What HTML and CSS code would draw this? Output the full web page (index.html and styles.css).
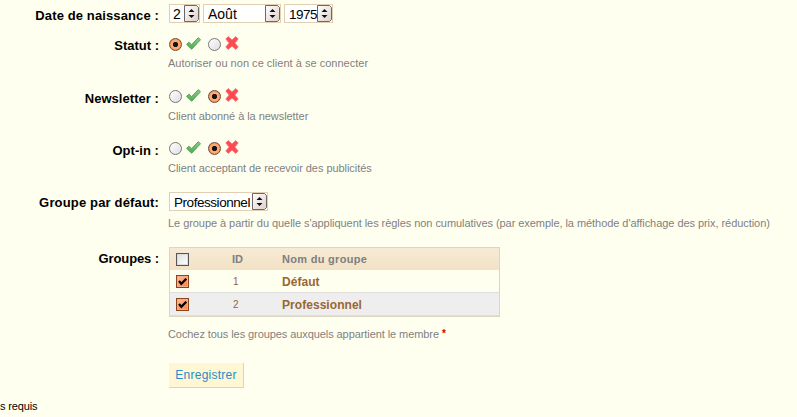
FILE: index.html
```
<!DOCTYPE html>
<html lang="fr">
<head>
    <meta charset="UTF-8">
    <title>Client</title>
    <link rel="stylesheet" href="styles.css">
</head>
<body>
    <svg width="0" height="0" class="defs">
        <defs>
            <linearGradient id="green" x1="0" y1="0" x2="0" y2="1">
                <stop offset="0" stop-color="#8fd28c"/>
                <stop offset="1" stop-color="#4fa94f"/>
            </linearGradient>
            <linearGradient id="spin" x1="0" y1="0" x2="1" y2="1">
                <stop offset="0" stop-color="#ffffff"/>
                <stop offset="1" stop-color="#dcd0cb"/>
            </linearGradient>
        </defs>
        <symbol id="check" viewBox="0 0 15 13">
            <path d="M.6 7.4 2.9 5.2 5.6 7.7 12.3.7 14.5 2.7 5.7 12.2Z" fill="url(#green)" stroke="#43964a" stroke-width=".9"/>
        </symbol>
        <symbol id="cross" viewBox="0 0 14 14">
            <path d="M.8 3 3.2.6 7 4 10.8.6 13.2 3 9.8 7 13.2 11 10.8 13.4 7 10 3.2 13.4.8 11 4.2 7Z" fill="#ff4b50" stroke="#f0696c" stroke-width=".8"/>
        </symbol>
        <symbol id="arrows" viewBox="0 0 15 17">
            <path d="M.5.5H12.5L14.5 2.5V14.5L12.5 16.5H.5Z" fill="url(#spin)" stroke="#6e6662"/>
            <path d="M7.5 4 10.5 7H4.5ZM7.5 13 4.5 10H10.5Z" fill="#111"/>
        </symbol>
    </svg>

    <form>
        <div class="row birthday">
            <label>Date de naissance :</label>
            <div class="field selects">
                <span class="select day"><select><option>2</option></select><svg><use href="#arrows"/></svg></span>
                <span class="select month"><select><option>Août</option></select><svg><use href="#arrows"/></svg></span>
                <span class="select year"><select><option>1975</option></select><svg><use href="#arrows"/></svg></span>
            </div>
        </div>
        <div class="row status">
            <label>Statut :</label>
            <div class="field">
                <div class="radios">
                    <input type="radio" name="active" checked>
                    <svg class="check"><use href="#check"/></svg>
                    <input type="radio" name="active">
                    <svg class="cross"><use href="#cross"/></svg>
                </div>
                <p class="hint hint-status">Autoriser ou non ce client à se connecter</p>
            </div>
        </div>
        <div class="row">
            <label class="lower">Newsletter :</label>
            <div class="field">
                <div class="radios">
                    <input type="radio" name="newsletter">
                    <svg class="check"><use href="#check"/></svg>
                    <input type="radio" name="newsletter" checked>
                    <svg class="cross"><use href="#cross"/></svg>
                </div>
                <p class="hint">Client abonné à la newsletter</p>
            </div>
        </div>
        <div class="row">
            <label class="lower">Opt-in :</label>
            <div class="field">
                <div class="radios">
                    <input type="radio" name="optin">
                    <svg class="check"><use href="#check"/></svg>
                    <input type="radio" name="optin" checked>
                    <svg class="cross"><use href="#cross"/></svg>
                </div>
                <p class="hint">Client acceptant de recevoir des publicités</p>
            </div>
        </div>
        <div class="row default-group">
            <label>Groupe par défaut:</label>
            <div class="field">
                <span class="select group"><select><option>Professionnel</option></select><svg><use href="#arrows"/></svg></span>
                <p class="hint hint-group">Le groupe à partir du quelle s'appliquent les règles non cumulatives (par exemple, la méthode d'affichage des prix, réduction)</p>
            </div>
        </div>
        <div class="row groups">
            <label>Groupes :</label>
            <div class="field">
                <table>
                    <tr>
                        <th class="tick"><input type="checkbox"></th>
                        <th class="id">ID</th>
                        <th class="title">Nom du groupe</th>
                    </tr>
                    <tr>
                        <td><input type="checkbox" checked></td>
                        <td class="id">1</td>
                        <td class="name">Défaut</td>
                    </tr>
                    <tr class="alt">
                        <td><input type="checkbox" checked></td>
                        <td class="id">2</td>
                        <td class="name">Professionnel</td>
                    </tr>
                </table>
                <p class="hint hint-members">Cochez tous les groupes auxquels appartient le membre <sup>*</sup></p>
                <button type="button">Enregistrer</button>
            </div>
        </div>
        <div class="required">s requis</div>
    </form>
</body>
</html>
```
FILE: styles.css
```
* {
    box-sizing: border-box;
}
body {
    margin: 0;
    height: 417px;
    overflow: hidden;
    background: #fffff0;
    color: #000;
    font-family: "Liberation Sans", Arial, sans-serif;
    font-size: 13px;
}
.defs {
    display: block;
}
.row {
    display: flex;
    height: 52px;
}
.birthday {
    height: 34px;
    padding-top: 4px;
}
.default-group {
    height: 57px;
    padding-top: 2px;
}
.groups {
    height: 152px;
}
label {
    width: 159px;
    margin-right: 10px;
    padding-top: 4px;
    line-height: 16px;
    font-weight: bold;
    text-align: right;
    white-space: nowrap;
}
.birthday label {
    letter-spacing: 0.12px;
}
.lower {
    padding-top: 5px;
    letter-spacing: 0.05px;
}
.default-group label {
    padding-top: 3px;
    letter-spacing: 0.16px;
}
.groups label {
    letter-spacing: -0.1px;
}
.selects {
    display: flex;
    gap: 3px;
}
.select {
    display: flex;
    height: 19px;
    border: 1px solid #e0d0b1;
    background: #fff;
}
.select svg {
    flex: none;
    width: 15px;
    height: 17px;
}
select {
    appearance: none;
    flex: 1;
    min-width: 0;
    height: 17px;
    padding: 1px 0 0 4px;
    border: 0;
    background: none;
    color: #000;
    font: 14px "Liberation Sans", Arial, sans-serif;
}
.day {
    width: 31px;
}
.day select {
    padding-left: 3px;
}
.month {
    width: 78px;
}
.year {
    width: 49px;
}
.year select {
    font-size: 13.5px;
    letter-spacing: -0.5px;
}
.group {
    width: 99px;
}
.group select {
    font-size: 13.5px;
    letter-spacing: -0.45px;
}
.radios {
    display: flex;
    height: 22px;
    padding-top: 2px;
}
.radios svg {
    flex: none;
}
.check {
    width: 15px;
    height: 13px;
    margin: 1px 7px 0 4px;
}
.cross {
    width: 14px;
    height: 14px;
    margin-left: 4px;
}
input {
    appearance: none;
    display: block;
    width: 13px;
    height: 13px;
    margin: 0;
}
.radios input {
    margin-top: 2px;
    border: 1px solid #777;
    border-radius: 50%;
    background: linear-gradient(135deg, #fff, #dedee2);
}
.radios input:checked {
    border-color: #754c36;
    background: radial-gradient(circle, #151515 0 2.2px, #ffa970 3px 4.3px, #e98450 6px);
}
.hint {
    margin: 0 0 0 -1px;
    color: #7f7f7f;
    font-size: 11px;
    line-height: 14px;
    letter-spacing: -0.055px;
    white-space: nowrap;
}
.radios + .hint {
    margin-top: 1px;
}
.radios + .hint-status {
    margin-top: 0;
    letter-spacing: 0.02px;
}
.hint-group {
    margin-top: 5px;
}
table {
    width: 331px;
    height: 70px;
    border: 1px solid #dfd5c3;
    border-spacing: 0;
    table-layout: fixed;
}
tr {
    height: 23px;
}
tr:first-child {
    height: 22px;
    background: linear-gradient(#f7ead6, #f2e1c4);
}
th, td {
    padding: 0 6px;
    font-size: 11px;
    line-height: 14px;
    text-align: left;
}
th {
    color: #7f7f7f;
}
td {
    border-bottom: 1px solid #dedede;
    color: #996633;
}
.tick {
    width: 50px;
}
.id {
    width: 56px;
    padding-left: 12px;
}
td.id {
    padding-top: 1px;
    padding-left: 13px;
    font-size: 10px;
}
.title {
    letter-spacing: 0.3px;
}
.name {
    padding-top: 1px;
    font-size: 12px;
    font-weight: bold;
    letter-spacing: 0.05px;
}
.alt {
    background: #eee;
}
table input {
    border: 1px solid #555;
    background: linear-gradient(135deg, #dedede, #fff);
    box-shadow: inset 0 0 0 1px #ddd;
}
table input:checked {
    border-color: #8b441c;
    background: url("data:image/svg+xml,%3Csvg xmlns='http://www.w3.org/2000/svg' viewBox='0 0 11 11'%3E%3Cpath d='M2 5 4.3 7.7 9.3 2.8' fill='none' stroke='%23000' stroke-width='2.3'/%3E%3C/svg%3E"), linear-gradient(135deg, #ffc3a0, #ff7d3c);
    box-shadow: inset 0 0 0 1px #f2ae88;
}
.hint-members {
    margin-top: 10px;
    letter-spacing: -0.08px;
}
sup {
    color: #c00;
    font-weight: bold;
    font-size: 10px;
    line-height: 0;
    vertical-align: 1px;
}
button {
    width: 75px;
    height: 25px;
    margin-top: 22px;
    padding: 0;
    border: 0;
    border-right: 1px solid #dfd5b3;
    border-bottom: 1px solid #dfd5b3;
    background: #fff6d3;
    color: #268ccd;
    font: 12px "Liberation Sans", Arial, sans-serif;
    letter-spacing: 0.25px;
}
.required {
    font-size: 11px;
    line-height: 14px;
    letter-spacing: -0.15px;
}
```
